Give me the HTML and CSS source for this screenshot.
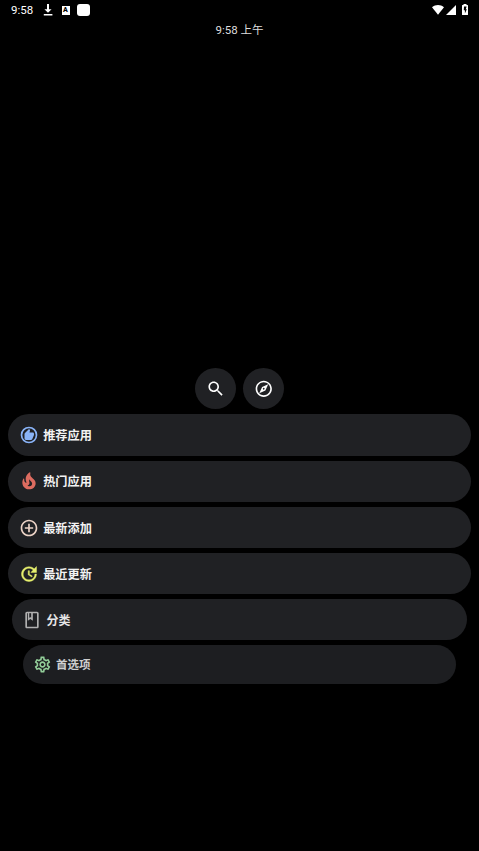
FILE: index.html
```html
<!DOCTYPE html>
<html lang="zh-CN">
<head>
<meta charset="utf-8">
<title>首选项</title>
<link rel="stylesheet" href="styles.css">
</head>
<body>
<header class="status">
  <span class="status-time">9:58</span>
  <svg class="download" viewBox="0 0 10 12"><path d="M4 0h2v5.3h2.6L5 8.800 1.400 5.300H4zM.8 10h8.600v1.400H.8z"/></svg>
  <span class="badge">A</span>
  <span class="square"></span>
  <span class="spacer"></span>
  <svg class="wifi" viewBox="0 0 12 10"><path d="M0 2.200C3.500-.7 8.500-.7 12 2.200L6 9.800z"/></svg>
  <svg class="signal" viewBox="0 0 10 10"><path d="M10 0v10H0z"/></svg>
  <svg class="battery" viewBox="0 0 6 11"><path fill-rule="evenodd" d="M1.500 0h3v1H5.500q.5 0 .5.500v9q0 .5-.5.500h-5q-.5 0-.5-.5v-9Q0 1 .5 1h1zM4.600 2.500H2L1.800 6.200h1.100v3.200l1.900-4.200H3.800z"/></svg>
</header>
<div class="clock">9:58 上午</div>
<main class="launcher">
  <div class="actions">
    <button class="round" aria-label="搜索"><svg viewBox="0 0 24 24"><path d="M15.500 14h-.79l-.28-.27C15.410 12.590 16 11.110 16 9.500 16 5.910 13.090 3 9.500 3S3 5.910 3 9.500 5.910 16 9.500 16c1.610 0 3.090-.59 4.230-1.570l.27.28v.79l5 4.990L20.490 19l-4.990-5zm-6 0C7.010 14 5 11.990 5 9.500S7.010 5 9.500 5 14 7.010 14 9.500 11.990 14 9.500 14z"/></svg></button>
    <button class="round" aria-label="浏览"><svg viewBox="0 0 24 24"><path d="M12 2C6.480 2 2 6.480 2 12s4.480 10 10 10 10-4.480 10-10S17.520 2 12 2zm0 18c-4.410 0-8-3.590-8-8s3.590-8 8-8 8 3.590 8 8-3.590 8-8 8zm-5.500-2.500l7.510-3.490L17.500 6.500 9.990 9.990 6.500 17.500zm5.500-6.600c.61 0 1.100.49 1.100 1.100s-.49 1.100-1.100 1.100-1.100-.49-1.100-1.100.49-1.100 1.100-1.100z"/></svg></button>
  </div>
  <nav class="list">
    <a class="row blue"><svg viewBox="0 0 24 24"><circle class="line" cx="12" cy="12" r="9"/><path d="M18 10.500v1.400l-2 4.900q-.5 1.200-1.700 1.200H8.300Q6.600 18 6.600 16.300V10.800q0-.8.600-1.300L12 4.800l1 .9q.3.300.2.800L12.600 9h4Q18 9 18 10.500z"/></svg><span>推荐应用</span></a>
    <a class="row red"><svg viewBox="0 0 24 24"><path d="M19.480 12.350c-1.570-4.080-7.160-4.300-5.810-10.230.1-.44-.37-.78-.75-.55C9.290 3.710 6.680 8 8.870 13.620c.18.460-.36.890-.75.590-1.810-1.370-2-3.340-1.840-4.750.06-.52-.62-.77-.91-.34C4.690 10.160 4 11.840 4 14.370c.38 5.600 5.110 7.320 6.810 7.540 2.430.31 5.060-.14 6.950-1.870 2.080-1.930 2.840-5.010 1.720-7.690zM10.200 17.380c1.440-.35 2.180-1.390 2.380-2.310.33-1.430-.96-2.830-.09-5.090.33 1.870 3.270 3.040 3.270 5.080.08 2.530-2.660 4.700-5.560 2.320z"/></svg><span>热门应用</span></a>
    <a class="row peach"><svg viewBox="0 0 24 24"><path d="M13 7h-2v4H7v2h4v4h2v-4h4v-2h-4V7zm-1-5C6.480 2 2 6.480 2 12s4.480 10 10 10 10-4.480 10-10S17.520 2 12 2zm0 18c-4.410 0-8-3.590-8-8s3.590-8 8-8 8 3.590 8 8-3.590 8-8 8z"/></svg><span>最新添加</span></a>
    <a class="row yellow"><svg viewBox="0 0 24 24"><path d="M21 10.120h-6.780l2.740-2.820c-2.730-2.700-7.150-2.800-9.880-.1-2.730 2.710-2.730 7.080 0 9.790s7.150 2.710 9.880 0C18.320 15.650 19 14.080 19 12.100h2c0 1.980-.88 4.550-2.640 6.290-3.510 3.480-9.210 3.480-12.720 0-3.500-3.470-3.530-9.110-.02-12.580s9.140-3.470 12.650 0L21 3v7.120zM12.500 8v4.250l3.500 2.080-.72 1.210L11 13V8h1.500z"/></svg><span>最近更新</span></a>
    <a class="row gray inset"><svg viewBox="0 0 24 24"><path d="M18 2H6c-1.100 0-2 .9-2 2v16c0 1.100.9 2 2 2h12c1.100 0 2-.9 2-2V4c0-1.100-.9-2-2-2zM9 4h1v5.500l-.5-.38L9 9.500V4zm9 16H6V4h1v9l3-2.250L13 13V4h5v16z"/><path d="M9 4h2v5l-1-.8-1 .8z" class="cut"/></svg><span>分类</span></a>
    <a class="row green inset-more"><svg viewBox="0 0 24 24"><path d="M19.430 12.980c.04-.32.070-.64.070-.98s-.03-.66-.07-.98l2.110-1.650c.19-.15.240-.42.120-.64l-2-3.460c-.12-.22-.39-.3-.61-.22l-2.490 1c-.52-.4-1.080-.73-1.690-.98l-.38-2.650C14.460 2.180 14.250 2 14 2h-4c-.25 0-.46.180-.49.420l-.38 2.650c-.61.250-1.170.590-1.690.980l-2.490-1c-.23-.09-.49 0-.61.220l-2 3.460c-.13.220-.07.490.120.640l2.110 1.650c-.04.320-.07.650-.07.980s.03.660.070.980l-2.110 1.650c-.19.150-.24.420-.12.640l2 3.460c.12.220.39.300.61.220l2.490-1c.52.400 1.080.730 1.690.980l.38 2.650c.03.240.24.420.49.420h4c.25 0 .46-.18.490-.42l.38-2.650c.61-.25 1.170-.59 1.690-.98l2.490 1c.23.090.49 0 .61-.22l2-3.460c.12-.22.070-.49-.12-.64l-2.110-1.650zm-1.980-1.710c.04.310.05.520.05.730s-.02.430-.05.730l-.14 1.130.89.700 1.080.840-.7 1.210-1.270-.51-1.040-.42-.9.680c-.43.320-.84.560-1.250.73l-1.060.43-.16 1.130-.2 1.350h-1.400l-.19-1.350-.16-1.130-1.060-.43c-.43-.18-.83-.41-1.230-.71l-.91-.7-1.060.43-1.270.51-.7-1.210 1.080-.84.890-.7-.14-1.130c-.03-.31-.05-.54-.05-.74s.02-.43.050-.73l.14-1.130-.89-.7-1.080-.84.700-1.210 1.270.51 1.040.42.900-.68c.43-.32.840-.56 1.250-.73l1.060-.43.160-1.130.2-1.350h1.390l.19 1.350.16 1.130 1.060.43c.43.180.83.410 1.230.71l.91.700 1.060-.43 1.270-.51.700 1.210-1.070.85-.89.700.14 1.130zM12 8c-2.210 0-4 1.790-4 4s1.790 4 4 4 4-1.790 4-4-1.790-4-4-4zm0 6c-1.100 0-2-.9-2-2s.9-2 2-2 2 .9 2 2-.9 2-2 2z"/></svg><span>首选项</span></a>
  </nav>
</main>
</body>
</html>
```

FILE: styles.css
```css
* { box-sizing: border-box; }
body {
  margin: 0;
  height: 851px;
  overflow: hidden;
  background: #000;
  color: #f1f1f1;
  font-family: Roboto, "Noto Sans CJK SC", sans-serif;
}
svg { display: block; flex: none; fill: currentColor; }
.status {
  display: flex;
  align-items: center;
  height: 20px;
  padding: 0 11.500px 0 11px;
  color: #fff;
}
.status-time { width: 32px; font-size: 11.500px; font-weight: 400; }
.download { width: 10px; height: 12px; }
.badge {
  width: 8px;
  height: 9px;
  margin-left: 8.500px;
  background: #fff;
  color: #000;
  font-size: 7px;
  line-height: 9px;
  font-weight: 900;
  text-align: center;
}
.square { width: 13px; height: 12px; margin-left: 7.500px; border-radius: 3px; background: #fff; }
.spacer { flex: 1; }
.wifi { width: 12px; height: 10px; margin: 0 2px 1px 0; }
.signal { width: 10px; height: 10px; margin: 0 6px 1px 0; }
.battery { width: 6px; height: 11px; margin-bottom: 1px; }
.clock {
  height: 20px;
  line-height: 20px;
  text-align: center;
  font-size: 11.500px;
  color: #dedede;
}
.launcher { padding: 328px 8px 0; }
.actions { display: flex; justify-content: center; gap: 7px; }
.round {
  display: grid;
  place-items: center;
  width: 41px;
  height: 41px;
  padding: 0;
  border: 0;
  border-radius: 50%;
  background: #202124;
  color: #fff;
}
.round svg { width: 19.500px; height: 19.500px; }
.list { display: flex; flex-direction: column; gap: 4.700px; margin-top: 5.400px; }
.row {
  display: flex;
  align-items: center;
  gap: 4.500px;
  height: 41.500px;
  padding-left: 10.700px;
  border-radius: 21px;
  background: #202124;
  font-size: 12.200px;
}
.row svg { width: 20px; height: 20px; }
.row span { color: #f3f3f3; font-weight: 700; }
.line { fill: none; stroke: currentColor; stroke-width: 2; }
.blue { color: #8ab4f8; }
.red { color: #dd6c60; }
.peach { color: #ecd3c6; }
.yellow { color: #e7f06e; }
.yellow svg { stroke: currentColor; stroke-width: .5; }
.gray { color: #b0b0b0; }
.green { color: #93cf9a; }
.inset { height: 41px; margin: 0 4px; padding-left: 10px; font-size: 12px; }
.inset span { color: #e6e6e6; }
.cut { fill: #202124; }
.inset-more { height: 39px; margin: 0 15px; padding-left: 10px; gap: 4px; font-size: 11.500px; background: #1d1e21; }
.inset-more svg { width: 19px; height: 19px; }
.inset-more span { color: #cfcfcf; }
```
